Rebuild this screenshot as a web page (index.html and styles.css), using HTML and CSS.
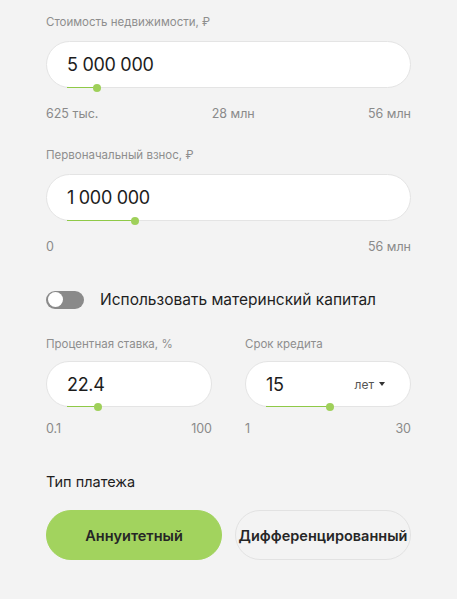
FILE: index.html
```html
<!DOCTYPE html>
<html lang="ru">
<head>
<meta charset="utf-8">
<link rel="stylesheet" href="styles.css">
</head>
<body>
<div class="calc">
  <div class="field">
    <div class="label">Стоимость недвижимости, ₽</div>
    <div class="input">
      <span class="value">5 000 000</span>
      <div class="slider"><div class="fill" style="width:30px"></div><div class="dot" style="left:30px"></div></div>
    </div>
    <div class="scale"><span>625 тыс.</span><span>28 млн</span><span>56 млн</span></div>
  </div>

  <div class="field f2">
    <div class="label">Первоначальный взнос, ₽</div>
    <div class="input">
      <span class="value">1 000 000</span>
      <div class="slider"><div class="fill" style="width:68px"></div><div class="dot" style="left:68px"></div></div>
    </div>
    <div class="scale"><span>0</span><span>56 млн</span></div>
  </div>

  <div class="toggle-row">
    <span class="toggle"><span class="knob"></span></span>
    <span class="toggle-text">Использовать материнский капитал</span>
  </div>

  <div class="row">
    <div class="field half">
      <div class="label">Процентная ставка, %</div>
      <div class="input">
        <span class="value">22.4</span>
        <div class="slider"><div class="fill" style="width:31px"></div><div class="dot" style="left:31px"></div></div>
      </div>
      <div class="scale"><span>0.1</span><span>100</span></div>
    </div>
    <div class="field half">
      <div class="label">Срок кредита</div>
      <div class="input">
        <span class="value">15</span>
        <span class="unit">лет <span class="caret"></span></span>
        <div class="slider"><div class="fill" style="width:64px"></div><div class="dot" style="left:64px"></div></div>
      </div>
      <div class="scale"><span>1</span><span>30</span></div>
    </div>
  </div>

  <div class="type-title">Тип платежа</div>
  <div class="buttons">
    <button class="btn active">Аннуитетный</button>
    <button class="btn">Дифференцированный</button>
  </div>
</div>
</body>
</html>
```

FILE: styles.css
```css
html, body {
  margin: 0;
  padding: 0;
  background: #f3f3f3;
}
body {
  font-family: "Inter", "Noto Sans", sans-serif;
  color: #1e1e1e;
}
.calc {
  padding: 14px 46px 0 46px;
}
.label {
  font-size: 11.5px;
  line-height: 16px;
  color: #8e8e8e;
  margin-bottom: 11px;
}
.input {
  position: relative;
  height: 45px;
  border: 1px solid #e4e4e4;
  border-radius: 24px;
  background: #fff;
  padding-left: 20px;
  display: flex;
  align-items: center;
  box-sizing: content-box;
}
.value {
  font-size: 18px;
  letter-spacing: -0.3px;
  color: #1c1c1c;
  flex: 1;
}
.unit {
  font-size: 12px;
  color: #555;
  margin-right: 25px;
  display: flex;
  align-items: center;
  gap: 5px;
}
.caret {
  width: 0;
  height: 0;
  border-left: 3px solid transparent;
  border-right: 3px solid transparent;
  border-top: 4px solid #333;
}
.slider {
  position: absolute;
  left: 20px;
  bottom: -1px;
  height: 1px;
}
.fill {
  position: absolute;
  left: 0;
  top: 0;
  height: 1px;
  background: #8fc947;
}
.dot {
  position: absolute;
  top: -3px;
  width: 8px;
  height: 8px;
  margin-left: -4px;
  border-radius: 50%;
  background: #9fd05a;
}
.scale {
  display: flex;
  justify-content: space-between;
  font-size: 12.5px;
  line-height: 16px;
  color: #8a8a8a;
  margin-top: 18px;
}
.f2 {
  margin-top: 25px;
}
.toggle-row {
  display: flex;
  align-items: center;
  margin-top: 35px;
  gap: 16px;
}
.toggle {
  width: 38px;
  height: 18px;
  border-radius: 9px;
  background: #8a8a8a;
  display: flex;
  align-items: center;
  padding-left: 2px;
  box-sizing: border-box;
}
.knob {
  width: 15px;
  height: 15px;
  border-radius: 50%;
  background: #fff;
}
.toggle-text {
  font-size: 15.5px;
  color: #1e1e1e;
}
.row {
  display: flex;
  gap: 33px;
  margin-top: 27px;
}
.half {
  flex: 1;
}
.half .label {
  margin-bottom: 9px;
}
.half .input {
  height: 44px;
}
.half .scale {
  margin-top: 14px;
}
.type-title {
  font-size: 14.5px;
  line-height: 20px;
  margin-top: 35px;
  color: #1e1e1e;
}
.buttons {
  display: flex;
  gap: 13px;
  margin-top: 18px;
}
.btn {
  flex: 1;
  height: 50px;
  border-radius: 25px;
  border: 1px solid #e2e2e2;
  background: transparent;
  font-family: inherit;
  font-size: 14.5px;
  font-weight: 600;
  color: #262626;
  padding: 0;
  white-space: nowrap;
}
.btn.active {
  background: #a2d35e;
  border-color: #a2d35e;
}
```
